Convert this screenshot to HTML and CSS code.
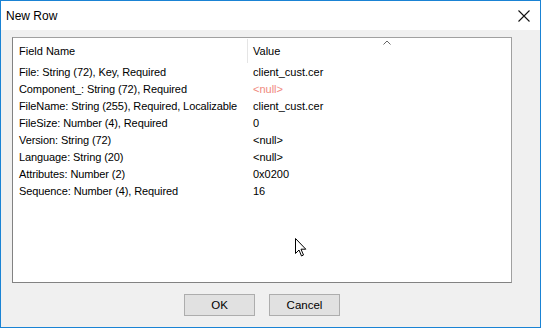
FILE: index.html
```html
<!DOCTYPE html>
<html lang="en">
<head>
    <meta charset="UTF-8">
    <title>New Row</title>
    <link rel="stylesheet" href="styles.css">
</head>
<body>
    <div class="window">
        <div class="titlebar">
            <span class="title">New Row</span>
            <svg class="close" width="12" height="12" viewBox="0 0 12 12">
                <path d="M0.5 0.5 L11.5 11.5 M11.5 0.5 L0.5 11.5" stroke="#111" stroke-width="1.1" fill="none"/>
            </svg>
        </div>
        <div class="content">
            <div class="listview">
                <div class="header">
                    <div class="col name">Field Name</div>
                    <div class="col value">Value</div>
                    <svg class="sort" width="8" height="5" viewBox="0 0 8 5">
                        <path d="M0.5 4.5 L4 1 L7.5 4.5" stroke="#666" stroke-width="1" fill="none"/>
                    </svg>
                </div>
                <div class="rows">
                    <div class="row"><div class="name">File: String (72), Key, Required</div><div class="value">client_cust.cer</div></div>
                    <div class="row"><div class="name">Component_: String (72), Required</div><div class="value null">&lt;null&gt;</div></div>
                    <div class="row"><div class="name">FileName: String (255), Required, Localizable</div><div class="value">client_cust.cer</div></div>
                    <div class="row"><div class="name">FileSize: Number (4), Required</div><div class="value">0</div></div>
                    <div class="row"><div class="name">Version: String (72)</div><div class="value">&lt;null&gt;</div></div>
                    <div class="row"><div class="name">Language: String (20)</div><div class="value">&lt;null&gt;</div></div>
                    <div class="row"><div class="name">Attributes: Number (2)</div><div class="value">0x0200</div></div>
                    <div class="row"><div class="name">Sequence: Number (4), Required</div><div class="value">16</div></div>
                </div>
                <svg class="cursor" width="13" height="20" viewBox="0 0 13 20">
                    <path d="M0.5 0.5 L0.5 15.5 L4 12 L6.5 18 L8.5 17 L6 11.2 L10.8 11.2 Z" fill="#fff" stroke="#000" stroke-width="1"/>
                </svg>
            </div>
            <div class="buttons">
                <button class="btn">OK</button>
                <button class="btn">Cancel</button>
            </div>
        </div>
    </div>
</body>
</html>
```

FILE: styles.css
```css
html, body {
    margin: 0;
    padding: 0;
}
body {
    font-family: "Liberation Sans", Arial, sans-serif;
    font-size: 11px;
    color: #000;
}
.window {
    width: 541px;
    height: 328px;
    box-sizing: border-box;
    border: 1px solid #1a83d4;
    display: flex;
    flex-direction: column;
    background: #f0f0f0;
}
.titlebar {
    height: 29px;
    background: #fff;
    display: flex;
    align-items: center;
    justify-content: space-between;
    padding: 0 10px 0 5px;
    flex-shrink: 0;
}
.title {
    font-size: 12px;
}
.content {
    flex: 1;
    padding: 7px 28px 0 11px;
    display: flex;
    flex-direction: column;
}
.listview {
    position: relative;
    height: 244px;
    background: #fff;
    border: 1px solid;
    border-color: #a0a0a0 #a0a0a0 #828282 #828282;
}
.header {
    position: relative;
    display: flex;
    height: 24px;
    align-items: center;
    margin-top: 1px;
}
.header .col {
    height: 100%;
    display: flex;
    align-items: center;
    box-sizing: border-box;
}
.header .name {
    width: 235px;
    padding-left: 6px;
    border-right: 1px solid #e5e5e5;
}
.header .value {
    padding-left: 5px;
}
.sort {
    position: absolute;
    left: 370px;
    top: 1px;
}
.row {
    display: flex;
    height: 17px;
    align-items: center;
    white-space: nowrap;
}
.row .name {
    width: 235px;
    padding-left: 6px;
    box-sizing: border-box;
    letter-spacing: -0.1px;
}
.row .value {
    padding-left: 5px;
}
.row .null {
    color: #f08a7e;
}
.cursor {
    position: absolute;
    left: 282px;
    top: 200px;
}
.buttons {
    display: flex;
    justify-content: center;
    gap: 14px;
    padding-top: 11px;
}
.btn {
    width: 71px;
    height: 22px;
    font-family: "Liberation Sans", Arial, sans-serif;
    font-size: 11.5px;
    background: #e1e1e1;
    border: 1px solid #adadad;
    padding: 0;
    color: #000;
}
```
